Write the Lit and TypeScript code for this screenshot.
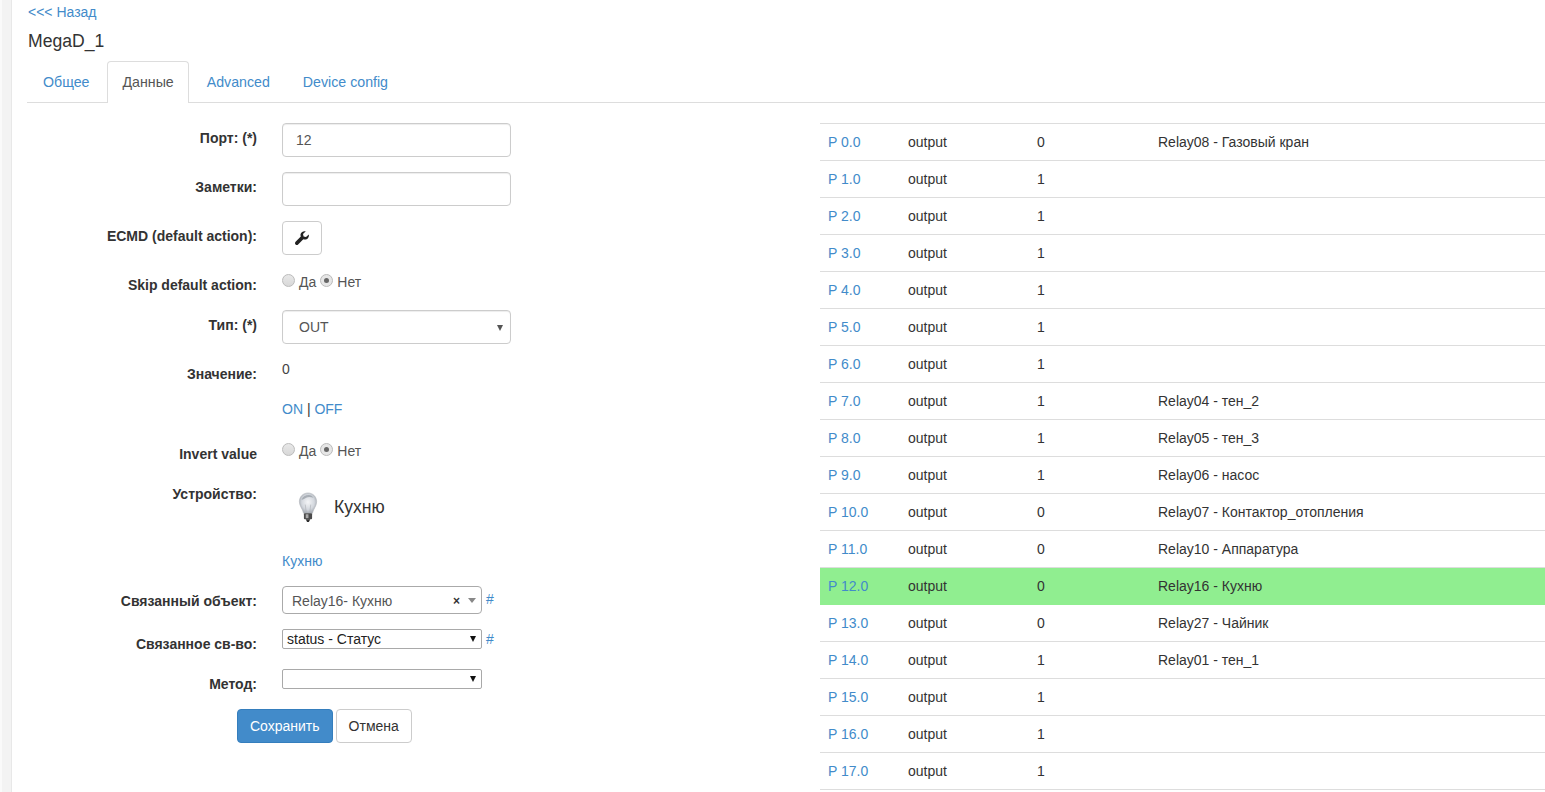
import { LitElement, html, css, svg } from "lit";
import { customElement } from "lit/decorators.js";

const rows: [string, string, string, boolean?][] = [
  ["P 0.0", "0", "Relay08 - Газовый кран"],
  ["P 1.0", "1", ""],
  ["P 2.0", "1", ""],
  ["P 3.0", "1", ""],
  ["P 4.0", "1", ""],
  ["P 5.0", "1", ""],
  ["P 6.0", "1", ""],
  ["P 7.0", "1", "Relay04 - тен_2"],
  ["P 8.0", "1", "Relay05 - тен_3"],
  ["P 9.0", "1", "Relay06 - насос"],
  ["P 10.0", "0", "Relay07 - Контактор_отопления"],
  ["P 11.0", "0", "Relay10 - Аппаратура"],
  ["P 12.0", "0", "Relay16 - Кухню", true],
  ["P 13.0", "0", "Relay27 - Чайник"],
  ["P 14.0", "1", "Relay01 - тен_1"],
  ["P 15.0", "1", ""],
  ["P 16.0", "1", ""],
  ["P 17.0", "1", ""],
];

@customElement("app-root")
export class AppRoot extends LitElement {
  static styles = css`
    :host {
      display: block;
      height: 792px;
      overflow: hidden;
      box-sizing: border-box;
      background: #fff;
      font-family: "Liberation Sans", Arial, sans-serif;
      font-size: 14px;
      line-height: 20px;
      color: #333;
    }
    * { box-sizing: border-box; }
    a { color: #428bca; text-decoration: none; }
    .frame {
      height: 792px;
      padding-left: 11px;
      background: linear-gradient(90deg, #fafafa 0 2px, #f3f3f3 2px);
    }
    .page {
      height: 792px;
      background: #fff;
      border-left: 1px solid #e8e8e8;
      padding: 2px 0 0 15px;
    }
    .back { display: block; height: 20px; margin-left: 1px; font-size: 14px; line-height: 20px; }
    h1 {
      margin: 8px 0 0 1px;
      font-size: 17.6px;
      font-weight: 400;
      line-height: 22px;
      color: #333;
    }
    .tabs {
      display: flex;
      margin-top: 9px;
      height: 42px;
      border-bottom: 1px solid #ddd;
      padding-left: 1px;
    }
    .tab {
      height: 42px;
      padding: 10px 14px;
      font-size: 14.2px;
      line-height: 20px;
      border: 1px solid transparent;
      border-bottom: 0;
      margin-right: 3px;
    }
    .tab.active {
      color: #555;
      background: #fff;
      border-color: #ddd;
      border-radius: 4px 4px 0 0;
    }
    .body { display: flex; align-items: flex-start; }
    .form { width: 793px; flex: none; padding-top: 20px; }
    .fr { display: flex; }
    .lab {
      width: 230px;
      flex: none;
      text-align: right;
      font-weight: 700;
      font-size: 14px;
      color: #333;
    }
    .ctl { margin-left: 25px; flex: none; }

    .r-port, .r-notes, .r-ecmd { height: 49px; }
    .r-port .lab, .r-notes .lab, .r-ecmd .lab { padding-top: 5px; }
    .r-skip { height: 40px; }
    .r-skip .lab { padding-top: 5px; }
    .r-skip .ctl { padding-top: 2px; }
    .r-type { height: 49px; }
    .r-type .lab { padding-top: 5px; }
    .r-value { height: 40px; }
    .r-value .lab { padding-top: 5px; }
    .r-value .ctl { color: #444; }
    .r-onoff { height: 39px; }
    .r-invert { height: 38px; }
    .r-invert .lab { padding-top: 6px; }
    .r-invert .ctl { padding-top: 3px; }
    .r-device { height: 75px; }
    .r-device .lab { padding-top: 8px; }
    .r-devlink { height: 35px; }
    .r-object { height: 43px; }
    .r-object .lab { padding-top: 5px; }
    .r-object .hash { margin-top: 3px; }
    .r-prop { height: 40px; }
    .r-prop .lab { padding-top: 5px; }
    .r-method { height: 40px; }
    .r-method .lab { padding-top: 5px; }

    .input {
      display: block;
      width: 229px;
      height: 34px;
      border: 1px solid #ccc;
      border-radius: 4px;
      padding: 6px 13px;
      font-size: 14px;
      line-height: 20px;
      color: #555;
      box-shadow: inset 0 1px 1px rgba(0, 0, 0, 0.075);
      position: relative;
    }
    .input.sel { padding-left: 16px; }
    .wrench {
      display: flex;
      align-items: center;
      justify-content: center;
      width: 40px;
      height: 34px;
      border: 1px solid #ccc;
      border-radius: 4px;
      background: #fff;
    }
    .radios { display: flex; align-items: center; height: 20px; color: #555; font-size: 14px; }
    .radio {
      width: 13px;
      height: 13px;
      border-radius: 50%;
      border: 1px solid #bbb;
      background: linear-gradient(#e8e8e8, #d8d8d8);
      display: flex;
      align-items: center;
      justify-content: center;
      margin: 0 4px 3px 0;
    }
    .radio.on { background: #e6e6e6; }
    .radio.on::after {
      content: "";
      width: 5px;
      height: 5px;
      border-radius: 50%;
      background: #666;
    }
    .radios .t { margin-right: 4px; }
    .caret {
      position: absolute;
      right: 7px;
      top: 14px;
      width: 0;
      height: 0;
      border-left: 3px solid transparent;
      border-right: 3px solid transparent;
      border-top: 6px solid #555;
    }
    .device { display: flex; align-items: center; padding: 11px 0 0 16px; height: 51px; font-size: 17.6px; color: #333; }
    .device svg { margin-right: 16px; flex: none; }
    .s2 {
      position: relative;
      width: 200px;
      height: 28px;
      border: 1px solid #aaa;
      border-radius: 4px;
      padding: 4px 9px;
      font-size: 14px;
      line-height: 20px;
      color: #555;
    }
    .s2 .x { position: absolute; right: 21px; top: 4px; font-weight: 700; font-size: 12px; color: #333; }
    .s2 .c {
      position: absolute;
      right: 5px;
      top: 11px;
      width: 0;
      height: 0;
      border-left: 4px solid transparent;
      border-right: 4px solid transparent;
      border-top: 5px solid #888;
    }
    .hash { margin-left: 4px; font-size: 14px; }
    .native {
      position: relative;
      width: 200px;
      height: 20px;
      border: 1px solid #a9a9a9;
      border-radius: 2px;
      padding: 0 4px;
      font-size: 14px;
      line-height: 18px;
      color: #222;
      background: #fff;
    }
    .native .c {
      position: absolute;
      right: 5px;
      top: 6px;
      width: 0;
      height: 0;
      border-left: 3.5px solid transparent;
      border-right: 3.5px solid transparent;
      border-top: 6px solid #111;
    }
    .inline { display: flex; align-items: flex-start; }
    .btns { display: flex; gap: 3px; padding-left: 210px; }
    .btn {
      height: 34px;
      border: 1px solid #ccc;
      border-radius: 4px;
      padding: 6px 12px;
      font-size: 14px;
      line-height: 20px;
      color: #333;
      background: #fff;
    }
    .btn.primary { background: #428bca; border-color: #357ebd; color: #fff; }
    .table { flex: 1; margin-top: 20px; border-top: 1px solid #ddd; }
    .row {
      display: flex;
      height: 37px;
      padding: 8px;
      border-bottom: 1px solid #ddd;
      font-size: 14px;
      line-height: 20px;
    }
    .row.hl { background: #90ee90; border-bottom-color: #90ee90; }
    .c1 { width: 80px; }
    .c2 { width: 129px; }
    .c3 { width: 121px; }
  `;

  private bulb() {
    return svg`<svg width="20" height="31" viewBox="0 0 22 32" preserveAspectRatio="none">
      <defs>
        <radialGradient id="g" cx="0.5" cy="0.45" r="0.6">
          <stop offset="0" stop-color="#f4f5f7"/>
          <stop offset="0.6" stop-color="#d4d8de"/>
          <stop offset="1" stop-color="#9aa0a8"/>
        </radialGradient>
      </defs>
      <path d="M11 1C5.500 1 1.500 5 1.500 10c0 4.500 3.500 7 4.600 12h9.800c1.100-5 4.600-7.500 4.600-12C20.500 5 16.500 1 11 1z" fill="url(#g)" stroke="#b0b4ba" stroke-width=".6"/>
      <path d="M4 8c1-3 4-5 8-5 2 0 4 1 5 3-3-1-6-1-8 0-2 1-3 2-5 2z" fill="#7f8690" opacity=".55"/>
      <path d="M9 21 8 13M13 21l1-8" stroke="#a7abb1" stroke-width=".6" fill="none"/>
      <rect x="6.500" y="22" width="9" height="6" rx="1" fill="#4b4b4b"/>
      <rect x="8.500" y="23" width="3" height="4" fill="#a9a9a9"/>
      <path d="M8.500 28h5l-1.500 3h-2z" fill="#2f2f2f"/>
    </svg>`;
  }

  private radios() {
    return html`<div class="radios">
      <span class="radio"></span><span class="t">Да</span>
      <span class="radio on"></span><span class="t">Нет</span>
    </div>`;
  }

  render() {
    return html`<div class="frame"><div class="page">
      <a class="back" href="#">&lt;&lt;&lt; Назад</a>
      <h1>MegaD_1</h1>
      <div class="tabs">
        <a class="tab" href="#">Общее</a>
        <a class="tab active" href="#">Данные</a>
        <a class="tab" href="#">Advanced</a>
        <a class="tab" href="#">Device config</a>
      </div>
      <div class="body">
        <div class="form">
          <div class="fr r-port"><div class="lab">Порт: (*)</div><div class="ctl"><div class="input">12</div></div></div>
          <div class="fr r-notes"><div class="lab">Заметки:</div><div class="ctl"><div class="input"></div></div></div>
          <div class="fr r-ecmd"><div class="lab">ECMD (default action):</div><div class="ctl"><div class="wrench">
            <svg width="14" height="14" viewBox="0 0 14 14"><path d="M13.800 3.400 11 6 8.600 5.400 8 3 10.800.3C8.600-.3 6.200.8 5.600 3c-.2.900-.1 1.800.2 2.600L.6 10.800c-.8.800-.8 1.900 0 2.600.7.700 1.800.7 2.500 0l5.200-5.200c.8.300 1.700.4 2.600.2 2.200-.6 3.400-2.800 2.900-5z" fill="#222"/></svg>
          </div></div></div>
          <div class="fr r-skip"><div class="lab">Skip default action:</div><div class="ctl">${this.radios()}</div></div>
          <div class="fr r-type"><div class="lab">Тип: (*)</div><div class="ctl"><div class="input sel">OUT<span class="caret"></span></div></div></div>
          <div class="fr r-value"><div class="lab">Значение:</div><div class="ctl">0</div></div>
          <div class="fr r-onoff"><div class="lab"></div><div class="ctl"><a href="#">ON</a> | <a href="#">OFF</a></div></div>
          <div class="fr r-invert"><div class="lab">Invert value</div><div class="ctl">${this.radios()}</div></div>
          <div class="fr r-device"><div class="lab">Устройство:</div><div class="ctl"><div class="device">${this.bulb()}<span>Кухню</span></div></div></div>
          <div class="fr r-devlink"><div class="lab"></div><div class="ctl"><a href="#">Кухню</a></div></div>
          <div class="fr r-object"><div class="lab">Связанный объект:</div><div class="ctl inline"><div class="s2">Relay16- Кухню<span class="x">×</span><span class="c"></span></div><a class="hash" href="#">#</a></div></div>
          <div class="fr r-prop"><div class="lab">Связанное св-во:</div><div class="ctl inline"><div class="native">status - Статус<span class="c"></span></div><a class="hash" href="#">#</a></div></div>
          <div class="fr r-method"><div class="lab">Метод:</div><div class="ctl"><div class="native"><span class="c"></span></div></div></div>
          <div class="btns"><div class="btn primary">Сохранить</div><div class="btn">Отмена</div></div>
        </div>
        <div class="table">
          ${rows.map(
            (r) => html`<div class="row ${r[3] ? "hl" : ""}">
              <div class="c1"><a href="#">${r[0]}</a></div>
              <div class="c2">output</div>
              <div class="c3">${r[1]}</div>
              <div>${r[2]}</div>
            </div>`
          )}
        </div>
      </div>
    </div></div>`;
  }
}
